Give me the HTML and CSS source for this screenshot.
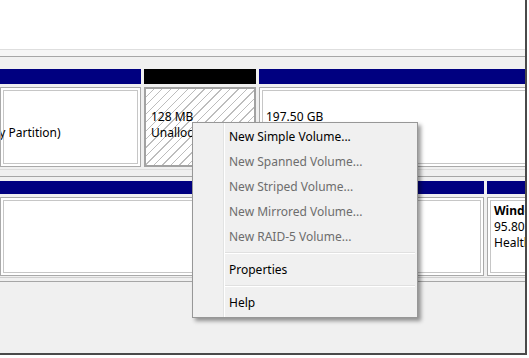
FILE: index.html
```html
<!DOCTYPE html>
<html lang="en">
<head>
    <meta charset="UTF-8">
    <title>Disk Management</title>
    <link rel="stylesheet" href="styles.css">
</head>
<body>
    <div class="frame">
        <div class="top"></div>
        <div class="rule"></div>

        <div class="disk first">
            <div class="part w1">
                <div class="bar blue"></div>
                <div class="box">
                    <div class="line">&nbsp;</div>
                    <div class="line">&nbsp;</div>
                    <div class="line clip">Healthy (Primary Partition)</div>
                </div>
            </div>
            <div class="part w2">
                <div class="bar black"></div>
                <div class="box free">
                    <div class="line">&nbsp;</div>
                    <div class="line">128 MB</div>
                    <div class="line">Unallocated</div>
                </div>
            </div>
            <div class="part w3">
                <div class="bar blue"></div>
                <div class="box">
                    <div class="line">&nbsp;</div>
                    <div class="line">197.50 GB</div>
                </div>
            </div>
        </div>

        <div class="split"></div>

        <div class="disk second">
            <div class="part w4">
                <div class="bar blue"></div>
                <div class="box"></div>
            </div>
            <div class="part w5">
                <div class="bar blue"></div>
                <div class="box">
                    <div class="line"><b>Windows (C:)</b></div>
                    <div class="line">95.80 GB NTFS</div>
                    <div class="line">Healthy (Boot, Page File)</div>
                </div>
            </div>
        </div>

        <div class="floor"></div>

        <div class="menu">
            <div class="item">New Simple Volume...</div>
            <div class="item off">New Spanned Volume...</div>
            <div class="item off">New Striped Volume...</div>
            <div class="item off">New Mirrored Volume...</div>
            <div class="item off">New RAID-5 Volume...</div>
            <div class="sep"></div>
            <div class="item">Properties</div>
            <div class="sep"></div>
            <div class="item">Help</div>
        </div>
    </div>
</body>
</html>
```

FILE: styles.css
```css
body { margin: 0; background: #fff; font-family: "Noto Sans", "Open Sans", Arial, sans-serif; font-size: 12px; color: #000; }

.frame { position: relative; width: 525px; height: 353px; overflow: hidden; background: #f0f0f0; border-right: 2px solid #4a4a4a; border-bottom: 2px solid #4a4a4a; }
.top { height: 49px; background: #fff; }
.rule { height: 6px; background: #f5f5f5; border-top: 1px solid #dedede; border-bottom: 1px solid #a6a6a6; margin-bottom: 12px; }

.disk { display: flex; gap: 3px; }
.part { display: flex; flex-direction: column; gap: 3px; flex: none; }
.bar { height: 15px; }
.second .bar { height: 13px; }
.blue { background: #000080; }
.black { background: #000; }

.box { height: 80px; box-sizing: border-box; padding: 5px 0 0 6px; background: #fff; border: 1px solid #a9a9a9; box-shadow: inset 0 0 0 2px #fff, inset 0 0 0 3px #c6c6c6; overflow: hidden; white-space: nowrap; }
.second .box { height: 79px; }
.line { height: 16px; line-height: 16px; }
.clip { margin-left: -96px; }

.free { border: 2px solid #a2a2a2; box-shadow: none; padding: 4px 0 0 5px;
    background: repeating-linear-gradient(135deg, #fff 0 5px, #bdbdbd 5px 6px); }

.w1 { width: 141px; }
.w2 { width: 112px; }
.w3 { width: 280px; }
.w4 { width: 484px; }
.w5 { width: 60px; }

.split { height: 6px; margin: 2px 0 4px; border-top: 1px solid #dcdcdc; border-bottom: 1px solid #a6a6a6; }
.floor { height: 3px; border-top: 1px solid #cfcfcf; border-bottom: 1px solid #a6a6a6; margin-top: 1px; }

/* context menu */
.menu { position: absolute; left: 192px; top: 122px; width: 224px; padding: 1px 0 2px; background: #f0f0f0; border: 1px solid #979797; box-shadow: 3px 3px 4px rgba(0,0,0,0.4);
    background-image: linear-gradient(to right, transparent 30px, #e2e3e3 30px, #e2e3e3 31px, #fff 31px, #fff 32px, transparent 32px); }
.item { height: 25px; line-height: 25px; padding-left: 36px; color: #000; }
.item.off { color: #6d6d6d; }
.sep { height: 8px; margin-left: 32px; margin-right: 2px; background: linear-gradient(#e0e0e0, #e0e0e0) 0 3px / 100% 1px no-repeat, linear-gradient(#fff, #fff) 0 4px / 100% 1px no-repeat; }
```
